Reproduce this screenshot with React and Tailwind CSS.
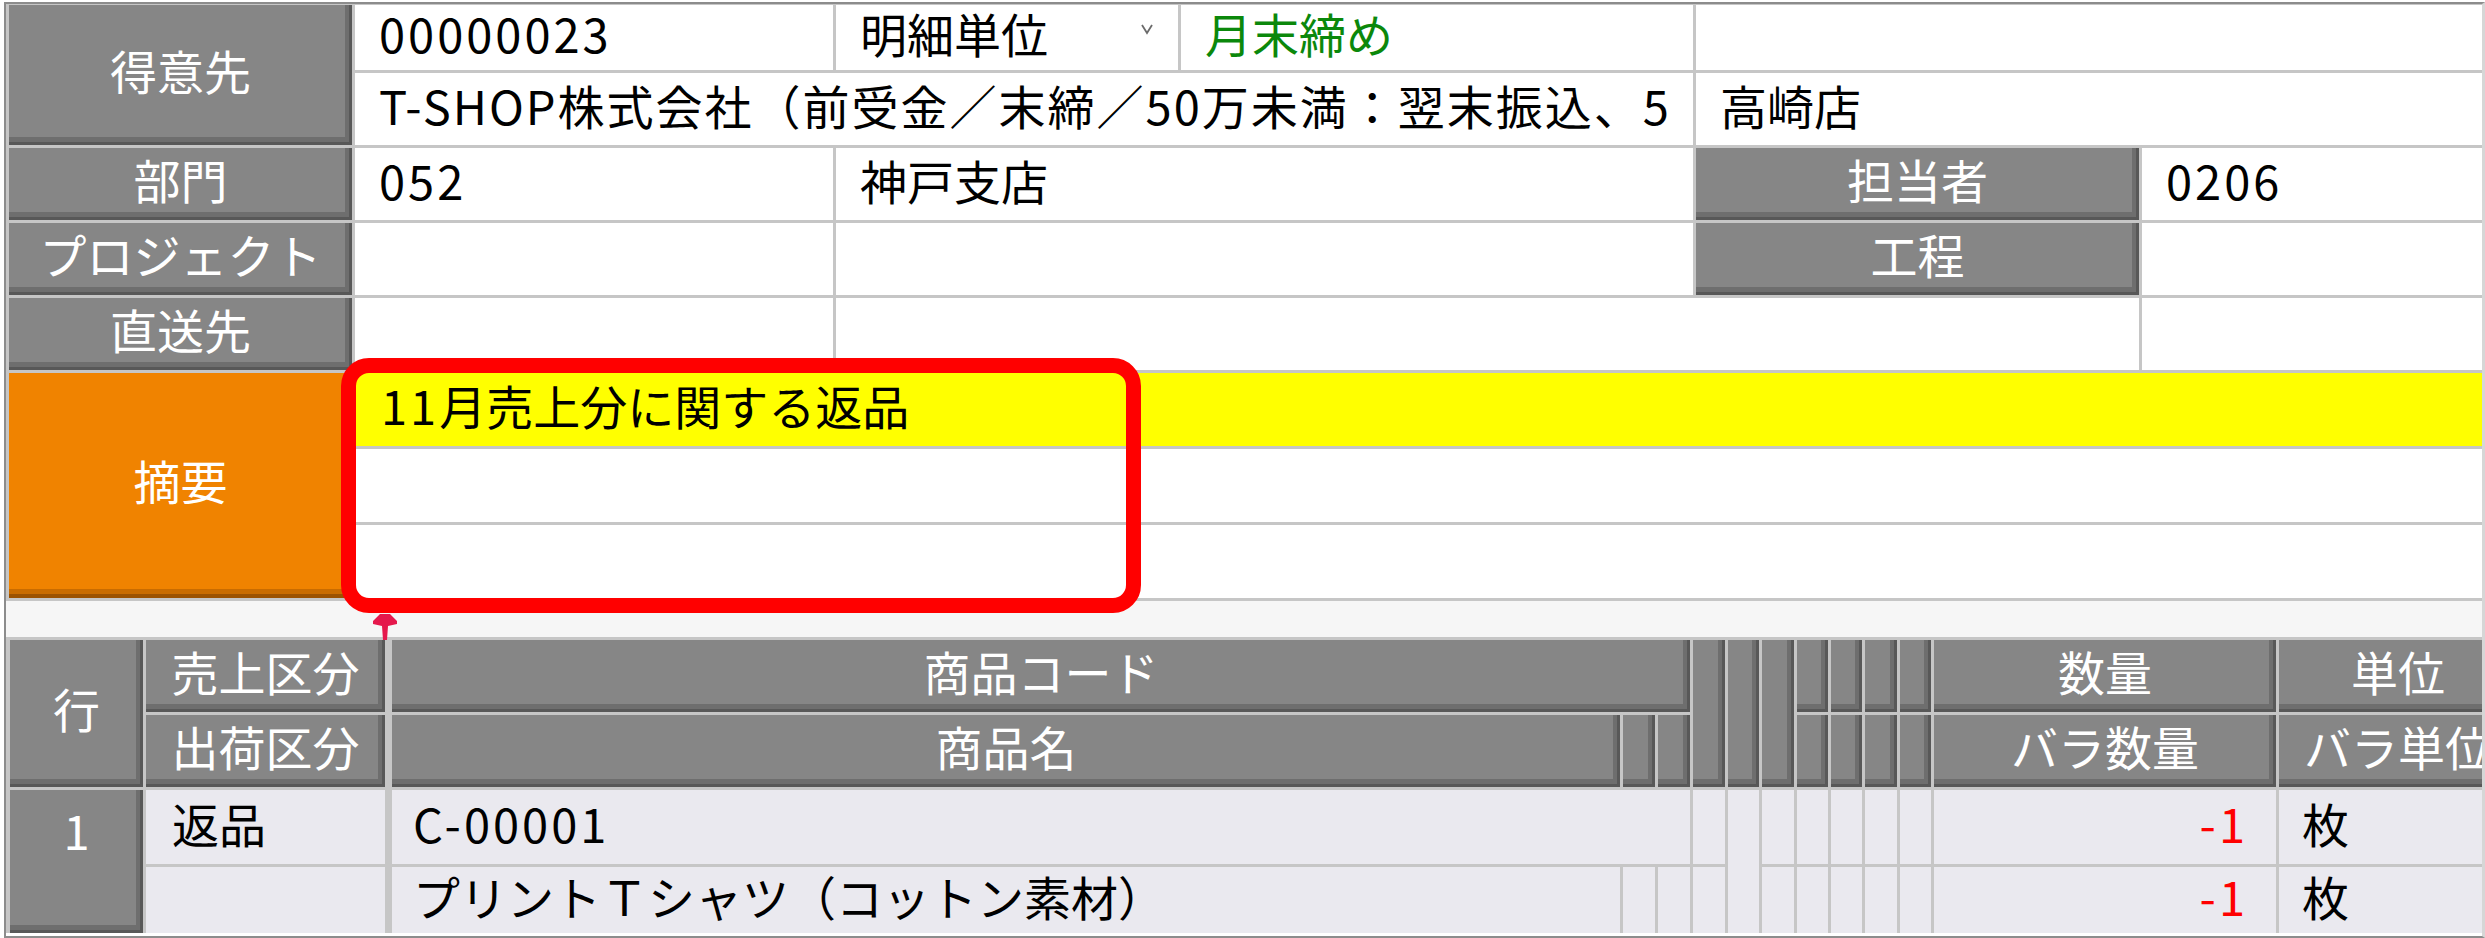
const font = "font-['Noto_Sans_CJK_JP','Noto_Sans',sans-serif]";
const dark = "bg-[#868686] text-white shadow-[inset_-3px_-3px_0_#585858,inset_-7px_-8px_0_#6e6e6e]";

function Label({ className = "", children }) {
  return (
    <div className={`${dark} flex items-center justify-center pb-[10px] ${className}`}>
      {children}
    </div>
  );
}

function Cell({ bg = "bg-white", className = "", children }) {
  return (
    <div className={`${bg} flex items-center pl-[24px] pb-[8px] whitespace-nowrap ${className}`}>
      {children}
    </div>
  );
}

function Td({ className = "", children }) {
  return (
    <div className={`bg-[#eae9ef] flex items-center pb-[8px] whitespace-nowrap ${className}`}>
      {children}
    </div>
  );
}

function Th({ className = "", children }) {
  return (
    <div className={`${dark} flex items-center justify-center pb-[10px] whitespace-nowrap ${className}`}>
      {children}
    </div>
  );
}

// digits in the reference font run a little wider
function Num({ children }) {
  return <span className="tracking-[3px]">{children}</span>;
}

function Chevron() {
  return (
    <svg width="14" height="12" viewBox="0 0 14 12" className="mb-[10px]">
      <polyline points="2,2 7,10 12,2" fill="none" stroke="#6b6b6b" strokeWidth="1.8" />
    </svg>
  );
}

function Pin() {
  return (
    <svg width="24" height="26" viewBox="0 0 24 26">
      <path d="M7 0 L17 0 L24 7 L24 10 L15 12 L14 26 L10 26 L9 12 L0 10 L0 7 Z" fill="#e5184c" />
    </svg>
  );
}

export default function App() {
  return (
    <div className={`${font} relative w-[2485px] h-[938px] bg-white overflow-hidden pl-[4px] pt-[2px] text-[47px] leading-[1.2] text-black`}>
      <div className="h-[936px] border-l-2 border-t-2 border-b-2 border-[#8c8c8c] border-r-[3px] border-r-[#d6d6d6] overflow-hidden">
        {/* header form */}
        <div className="grid grid-cols-[343px_478px_342px_512px_443px_1fr] grid-rows-[65px_72px_72px_72px_72px_73px_73px_73px] gap-[3px] bg-[#c6c6c6] pl-[3px] pt-[1px] pb-[3px]">
          <Label className="col-start-1 row-start-1 row-span-2">得意先</Label>
          <Cell className="col-start-2 row-start-1"><Num>00000023</Num></Cell>
          <Cell className="col-start-3 row-start-1 justify-between pl-[19px] pr-[24px]">
            <span>明細単位</span>
            <Chevron />
          </Cell>
          <Cell className="col-start-4 row-start-1 text-[#0b880b]">月末締め</Cell>
          <Cell className="col-start-5 col-span-2 row-start-1" />

          <Cell className="col-start-2 col-span-3 row-start-2 tracking-[2px]">T-SHOP株式会社（前受金／末締／50万未満：翌末振込、5</Cell>
          <Cell className="col-start-5 col-span-2 row-start-2">高崎店</Cell>

          <Label className="col-start-1 row-start-3">部門</Label>
          <Cell className="col-start-2 row-start-3"><Num>052</Num></Cell>
          <Cell className="col-start-3 col-span-2 row-start-3">神戸支店</Cell>
          <Label className="col-start-5 row-start-3">担当者</Label>
          <Cell className="col-start-6 row-start-3"><Num>0206</Num></Cell>

          <Label className="col-start-1 row-start-4">プロジェクト</Label>
          <Cell className="col-start-2 row-start-4" />
          <Cell className="col-start-3 col-span-2 row-start-4" />
          <Label className="col-start-5 row-start-4">工程</Label>
          <Cell className="col-start-6 row-start-4" />

          <Label className="col-start-1 row-start-5">直送先</Label>
          <Cell className="col-start-2 row-start-5" />
          <Cell className="col-start-3 col-span-3 row-start-5" />
          <Cell className="col-start-6 row-start-5" />

          <div className="col-start-1 row-start-6 row-span-3 bg-[#f08300] text-white flex items-center justify-center pb-[10px] shadow-[inset_0_-4px_0_#9c5200,inset_0_-9px_0_#c96c00]">
            摘要
          </div>
          <Cell bg="bg-[#ffff00]" className="col-start-2 col-span-5 row-start-6 pl-[26px]">
            <Num>11</Num>月売上分に関する返品
          </Cell>
          <Cell className="col-start-2 col-span-5 row-start-7" />
          <Cell className="col-start-2 col-span-5 row-start-8" />
        </div>

        <div className="h-[36px] bg-[#f6f6f6]" />

        {/* detail grid */}
        <div className="grid grid-cols-[133px_239px_1px_1228px_32px_32px_32px_31px_32px_31px_31px_32px_31px_342px_238px] grid-rows-[72px_72px_74px_66px] gap-[3px] bg-[#c6c6c6] pl-[4px] pt-[3px] w-max">
          <Th className="col-start-1 row-start-1 row-span-2">行</Th>
          <Th className="col-start-2 row-start-1">売上区分</Th>
          <Th className="col-start-2 row-start-2">出荷区分</Th>
          <Th className="col-start-4 col-span-3 row-start-1">商品コード</Th>
          <Th className="col-start-4 row-start-2">商品名</Th>
          <Th className="col-start-5 row-start-2" />
          <Th className="col-start-6 row-start-2" />
          <Th className="col-start-7 row-start-1 row-span-2" />
          <Th className="col-start-8 row-start-1 row-span-2" />
          <Th className="col-start-9 row-start-1 row-span-2" />
          <Th className="col-start-10 row-start-1" />
          <Th className="col-start-11 row-start-1" />
          <Th className="col-start-12 row-start-1" />
          <Th className="col-start-13 row-start-1" />
          <Th className="col-start-10 row-start-2" />
          <Th className="col-start-11 row-start-2" />
          <Th className="col-start-12 row-start-2" />
          <Th className="col-start-13 row-start-2" />
          <Th className="col-start-14 row-start-1">数量</Th>
          <Th className="col-start-14 row-start-2">バラ数量</Th>
          <Th className="col-start-15 row-start-1">単位</Th>
          <Th className="col-start-15 row-start-2">バラ単位</Th>

          <div className={`${dark} col-start-1 row-start-3 row-span-2 flex justify-center pt-[12px]`}>1</div>
          <Td className="col-start-2 row-start-3 pl-[26px]">返品</Td>
          <Td className="col-start-2 row-start-4" />
          <Td className="col-start-4 col-span-3 row-start-3 pl-[21px]"><Num>C-00001</Num></Td>
          <Td className="col-start-7 row-start-3" />
          <Td className="col-start-8 row-start-3 row-span-2" />
          <Td className="col-start-9 row-start-3" />
          <Td className="col-start-10 row-start-3" />
          <Td className="col-start-11 row-start-3" />
          <Td className="col-start-12 row-start-3" />
          <Td className="col-start-13 row-start-3" />
          <Td className="col-start-14 row-start-3 justify-end pr-[28px] text-[#ff0000]"><Num>-1</Num></Td>
          <Td className="col-start-15 row-start-3 pl-[23px]">枚</Td>

          <Td className="col-start-4 row-start-4 pl-[21px]">プリントＴシャツ（コットン素材）</Td>
          <Td className="col-start-5 row-start-4" />
          <Td className="col-start-6 row-start-4" />
          <Td className="col-start-7 row-start-4" />
          <Td className="col-start-9 row-start-4" />
          <Td className="col-start-10 row-start-4" />
          <Td className="col-start-11 row-start-4" />
          <Td className="col-start-12 row-start-4" />
          <Td className="col-start-13 row-start-4" />
          <Td className="col-start-14 row-start-4 justify-end pr-[28px] text-[#ff0000]"><Num>-1</Num></Td>
          <Td className="col-start-15 row-start-4 pl-[23px]">枚</Td>
        </div>
      </div>

      {/* highlight overlay */}
      <div className="absolute left-[341px] top-[358px] w-[800px] h-[255px] border-[15px] border-[#ff0000] rounded-[28px]" />
      <div className="absolute left-[373px] top-[614px]">
        <Pin />
      </div>
    </div>
  );
}
